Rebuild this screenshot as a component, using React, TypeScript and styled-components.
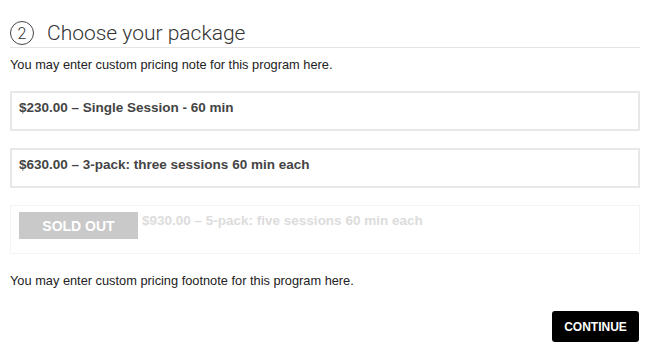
import React from 'react';
import styled, { createGlobalStyle } from 'styled-components';

const GlobalStyle = createGlobalStyle`
  body {
    margin: 0;
    background: #ffffff;
    font-family: 'Liberation Sans', Arial, sans-serif;
    color: #222222;
  }
`;

const Page = styled.div`
  padding: 20px 10px 14px;
  display: flex;
  flex-direction: column;
`;

const Header = styled.div`
  display: flex;
  align-items: center;
  gap: 13px;
  padding-bottom: 1px;
  border-bottom: 1px solid #e4e4e4;
`;

const StepNumber = styled.span`
  width: 22px;
  height: 22px;
  border: 1px solid #444444;
  border-radius: 50%;
  display: flex;
  align-items: center;
  justify-content: center;
  font-family: Roboto, 'Liberation Sans', sans-serif;
  font-weight: 300;
  font-size: 16px;
  color: #333333;
`;

const Title = styled.h2`
  margin: 0;
  font-family: Roboto, 'Liberation Sans', sans-serif;
  font-weight: 300;
  font-size: 21px;
  color: #333333;
  line-height: 26px;
`;

const Note = styled.p`
  margin: 9px 0 18px;
  font-size: 12.8px;
  line-height: 16px;
`;

const Packages = styled.div`
  display: flex;
  flex-direction: column;
  gap: 17px;
`;

interface OptionProps {
  $disabled?: boolean;
}

const Option = styled.div<OptionProps>`
  display: flex;
  align-items: flex-start;
  gap: 4px;
  height: ${(p) => (p.$disabled ? '49px' : '40px')};
  box-sizing: border-box;
  padding: ${(p) => (p.$disabled ? '5px 8px' : '5px 7px')};
  border: ${(p) => (p.$disabled ? '1px solid #f3f3f3' : '2px solid #e8e8e8')};
  font-size: 13.5px;
  font-weight: 700;
  line-height: 16px;
  color: ${(p) => (p.$disabled ? '#dcdcdc' : '#444444')};
`;

const SoldOut = styled.span`
  width: 119px;
  height: 27px;
  background: #c9c9c9;
  color: #ffffff;
  font-size: 14px;
  font-weight: 700;
  display: flex;
  align-items: center;
  justify-content: center;
  margin-top: 1px;
`;

const OptionLabel = styled.span`
  padding-top: 2px;
`;

const Footnote = styled.p`
  margin: 19px 0 0;
  font-size: 12.8px;
  line-height: 16px;
`;

const Actions = styled.div`
  display: flex;
  justify-content: flex-end;
  margin-top: 22px;
  padding-right: 1px;
`;

const ContinueButton = styled.button`
  width: 87px;
  height: 31px;
  border: none;
  border-radius: 3px;
  background: #000000;
  color: #ffffff;
  font-family: 'Liberation Sans', Arial, sans-serif;
  font-weight: 700;
  font-size: 12px;
  cursor: pointer;
`;

const packages = [
  { label: '$230.00 – Single Session - 60 min', soldOut: false },
  { label: '$630.00 – 3-pack: three sessions 60 min each', soldOut: false },
  { label: '$930.00 – 5-pack: five sessions 60 min each', soldOut: true },
];

export default function App() {
  return (
    <>
      <GlobalStyle />
      <Page>
        <Header>
          <StepNumber>2</StepNumber>
          <Title>Choose your package</Title>
        </Header>
        <Note>You may enter custom pricing note for this program here.</Note>
        <Packages>
          {packages.map((p) => (
            <Option key={p.label} $disabled={p.soldOut}>
              {p.soldOut && <SoldOut>SOLD OUT</SoldOut>}
              <OptionLabel>{p.label}</OptionLabel>
            </Option>
          ))}
        </Packages>
        <Footnote>You may enter custom pricing footnote for this program here.</Footnote>
        <Actions>
          <ContinueButton>CONTINUE</ContinueButton>
        </Actions>
      </Page>
    </>
  );
}
